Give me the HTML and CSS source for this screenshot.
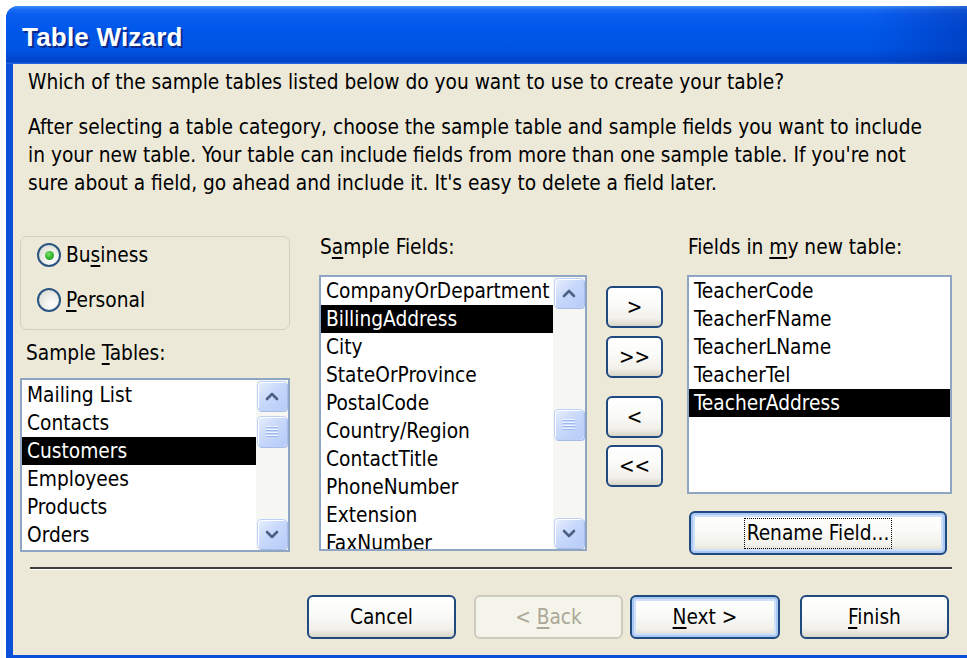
FILE: index.html
```html
<!DOCTYPE html>
<html lang="en">
<head>
<meta charset="utf-8">
<title>Table Wizard</title>
<link rel="stylesheet" href="styles.css">
</head>
<body>
<div class="window">
  <div class="titlebar"><span class="title">Table Wizard</span></div>
  <div class="frame">
    <div class="client">
      <p class="prompt">Which of the sample tables listed below do you want to use to create your table?</p>
      <p class="help">After selecting a table category, choose the sample table and sample fields you want to include<br>in your new table. Your table can include fields from more than one sample table. If you're not<br>sure about a field, go ahead and include it. It's easy to delete a field later.</p>

      <div class="main">
        <div class="col col-tables">
          <div class="groupbox">
            <div class="radio-row"><span class="radio checked"></span><span>Bu<u>s</u>iness</span></div>
            <div class="radio-row"><span class="radio"></span><span><u>P</u>ersonal</span></div>
          </div>
          <div class="label label-tables">Sample <u>T</u>ables:</div>
          <div class="listbox list-tables">
            <ul class="items">
              <li>Mailing List</li>
              <li>Contacts</li>
              <li class="sel">Customers</li>
              <li>Employees</li>
              <li>Products</li>
              <li>Orders</li>
            </ul>
            <div class="scrollbar">
              <div class="sb-btn"><svg viewBox="0 0 16 16" width="16" height="16"><polyline points="3,11 8,6 13,11" /></svg></div>
              <div class="sb-track">
                <div class="sb-thumb thumb-tables"><span class="grip"></span></div>
              </div>
              <div class="sb-btn"><svg viewBox="0 0 16 16" width="16" height="16"><polyline points="3,6 8,11 13,6" /></svg></div>
            </div>
          </div>
        </div>

        <div class="col col-fields">
          <div class="label">S<u>a</u>mple Fields:</div>
          <div class="listbox list-fields">
            <ul class="items">
              <li>CompanyOrDepartment</li>
              <li class="sel">BillingAddress</li>
              <li>City</li>
              <li>StateOrProvince</li>
              <li>PostalCode</li>
              <li>Country/Region</li>
              <li>ContactTitle</li>
              <li>PhoneNumber</li>
              <li>Extension</li>
              <li class="partial">FaxNumber</li>
            </ul>
            <div class="scrollbar">
              <div class="sb-btn"><svg viewBox="0 0 16 16" width="16" height="16"><polyline points="3,11 8,6 13,11" /></svg></div>
              <div class="sb-track">
                <div class="sb-thumb thumb-fields"><span class="grip"></span></div>
              </div>
              <div class="sb-btn"><svg viewBox="0 0 16 16" width="16" height="16"><polyline points="3,6 8,11 13,6" /></svg></div>
            </div>
          </div>
        </div>

        <div class="col col-move">
          <button class="btn move m1"><span>&gt;</span></button>
          <button class="btn move m2"><span>&gt;&gt;</span></button>
          <button class="btn move m3"><span>&lt;</span></button>
          <button class="btn move m4"><span>&lt;&lt;</span></button>
        </div>

        <div class="col col-new">
          <div class="label">Fields in <u>m</u>y new table:</div>
          <div class="listbox list-new">
            <ul class="items">
              <li>TeacherCode</li>
              <li>TeacherFName</li>
              <li>TeacherLName</li>
              <li>TeacherTel</li>
              <li class="sel">TeacherAddress</li>
            </ul>
          </div>
          <button class="btn focused rename"><span class="focus-rect">Rename Field...</span></button>
        </div>
      </div>

      <div class="separator"></div>

      <div class="footer">
        <button class="btn wide cancel"><span>Cancel</span></button>
        <button class="btn wide disabled back"><span>&lt; <u>B</u>ack</span></button>
        <button class="btn wide focused next"><span><u>N</u>ext &gt;</span></button>
        <button class="btn wide finish"><span><u>F</u>inish</span></button>
      </div>
    </div>
  </div>
</div>
</body>
</html>
```

FILE: styles.css
```css
html, body {
  margin: 0;
  padding: 0;
  background: #ffffff;
  overflow: hidden;
  width: 967px;
  height: 658px;
}

body {
  font-family: "DejaVu Sans Condensed", "DejaVu Sans", Tahoma, sans-serif;
  font-size: 20.7px;
  color: #000;
}

u { text-decoration-thickness: 2px; text-underline-offset: 3px; }

.window {
  margin: 6px 0 0 6px;
  width: 980px;
  height: 652px;
  border-top-left-radius: 12px;
  overflow: hidden;
  background: #0a4fd8;
}

/* ---------- title bar ---------- */
.titlebar {
  height: 58px;
  background:
    linear-gradient(90deg, rgba(0,0,0,0) 0%, rgba(0,0,0,0) 88%, rgba(0,20,120,0.35) 100%),
    linear-gradient(180deg, #3e92ff 0%, #1a6cf5 6%, #0a5ef0 14%, #0058ea 40%, #0054e3 75%, #0048d2 90%, #0244c6 96%, #2c6ee8 100%);
  display: flex;
  align-items: center;
  padding-left: 16px;
  box-sizing: border-box;
}

.title {
  font-family: "Liberation Sans", Arial, sans-serif;
  font-weight: bold;
  font-size: 26px;
  color: #ffffff;
  text-shadow: 2px 2px 0 #0a2a8c;
  margin-top: 4px;
  letter-spacing: 0.2px;
}

/* ---------- frame ---------- */
.frame {
  height: 594px;
  border-left: 7px solid #0b50da;
  border-bottom: 3px solid #0b50da;
  box-sizing: border-box;
  background: #ece9d8;
}

.client {
  height: 591px;
  background: #ece9d8;
  padding-top: 4px;
  box-sizing: border-box;
}

p {
  margin: 0;
  line-height: 28px;
  padding-left: 15px;
}

.help { margin-top: 17px; }

/* ---------- main area ---------- */
.main {
  display: flex;
  align-items: flex-start;
  margin-top: 36px;
  padding-left: 7px;
}

.col { display: flex; flex-direction: column; }

.col-tables { width: 270px; }
.col-fields { width: 268px; margin-left: 29px; }
.col-move   { width: 57px;  margin-left: 19px; padding-top: 53px; }
.col-new    { width: 265px; margin-left: 24px; }

.label {
  line-height: 28px;
  padding-left: 1px;
}

.label-tables {
  margin-top: 9px;
  padding-left: 6px;
}

.groupbox {
  margin-top: 3px;
  height: 94px;
  border: 1px solid #d0d0bf;
  border-radius: 7px;
  box-sizing: border-box;
  padding-top: 4px;
  padding-left: 16px;
}

.radio-row {
  display: flex;
  align-items: center;
  height: 28px;
  margin-bottom: 17px;
}

.radio {
  width: 24px;
  height: 24px;
  box-sizing: border-box;
  border: 2px solid #2a5580;
  border-radius: 50%;
  background: radial-gradient(circle at 65% 70%, #ffffff 0%, #f2f2ee 35%, #d6d5cc 100%);
  margin-right: 5px;
  display: flex;
  align-items: center;
  justify-content: center;
}

.radio.checked::after {
  content: "";
  width: 9px;
  height: 9px;
  border-radius: 50%;
  background: radial-gradient(circle at 40% 35%, #7ee26a 0%, #30b02c 55%, #1d8f1d 100%);
}

/* ---------- list boxes ---------- */
.listbox {
  border: 2px solid #8ea6c4;
  background: #ffffff;
  box-sizing: border-box;
  display: flex;
  overflow: hidden;
}

.list-tables { margin-top: 11px; height: 174px; }
.list-fields { margin-top: 14px; height: 276px; }
.list-new    { margin-top: 14px; height: 219px; }

.items {
  list-style: none;
  margin: 0;
  padding: 0;
  flex: 1;
  min-width: 0;
  overflow: hidden;
}

.list-tables .items { padding-top: 1px; }

.items li {
  height: 28px;
  line-height: 28px;
  padding-left: 5px;
  white-space: nowrap;
}

/* last row is only partly scrolled into view */
.items li.partial {
  height: 22px;
  overflow: hidden;
}

.items li.sel {
  background: #000000;
  color: #ffffff;
}

/* ---------- scroll bars ---------- */
.scrollbar {
  width: 32px;
  display: flex;
  flex-direction: column;
  background: #f6f6f2;
  padding: 1px 1px;
  box-sizing: border-box;
}

.sb-btn, .sb-thumb {
  border: 1px solid #bdd0f7;
  border-radius: 4px;
  background: linear-gradient(135deg, #e8effe 0%, #c9d9fb 45%, #b6cbf8 100%);
  box-shadow: inset 1px 1px 0 #ffffff, 1px 1px 0 #a8bde8;
  box-sizing: border-box;
  display: flex;
  align-items: center;
  justify-content: center;
}

.sb-btn { height: 30px; }

.sb-btn svg polyline {
  fill: none;
  stroke: #4d6185;
  stroke-width: 2.6;
  stroke-linecap: round;
  stroke-linejoin: round;
}

.sb-track {
  flex: 1;
  display: flex;
  flex-direction: column;
}

.sb-thumb { height: 31px; }
.thumb-tables { margin-top: 5px; }
.thumb-fields { margin-top: 101px; }

.grip {
  width: 12px;
  height: 11px;
  background: repeating-linear-gradient(180deg, #eef4ff 0 1px, #9ab6ee 1px 2px, transparent 2px 3px);
}

/* ---------- buttons ---------- */
.btn {
  font-family: inherit;
  font-size: 20.7px;
  color: #000;
  border: 2px solid #1f4a80;
  border-radius: 6px;
  background: linear-gradient(180deg, #ffffff 0%, #fbfbf9 40%, #f1f0ea 80%, #d9d6c8 100%);
  box-sizing: border-box;
  padding: 0;
  display: flex;
  align-items: center;
  justify-content: center;
  white-space: pre;
}

.move { height: 42px; width: 57px; }
.m2 { margin-top: 8px; }
.m3 { margin-top: 18px; }
.m4 { margin-top: 7px; }

.btn.focused {
  box-shadow: inset 0 0 0 2px #a9c8f5, inset 0 0 0 4px #cfe0fb;
}

.rename {
  margin-top: 17px;
  margin-left: 2px;
  width: 258px;
  height: 44px;
}

.focus-rect {
  border: 1px dotted #000;
  padding: 2px 2px 3px;
  line-height: 24px;
}

.separator {
  margin: 12px 0 0 17px;
  width: 922px;
  height: 2px;
  background: #3c3c38;
  box-shadow: 0 1px 0 #ffffff;
}

.footer {
  display: flex;
  margin-top: 26px;
  padding-left: 294px;
}

.wide { width: 149px; height: 44px; }
.back { margin-left: 18px; }
.next { margin-left: 7px; width: 150px; }
.finish { margin-left: 20px; }

.btn.disabled {
  color: #aca899;
  border-color: #cdcbbd;
  background: #f5f4ea;
}
```
